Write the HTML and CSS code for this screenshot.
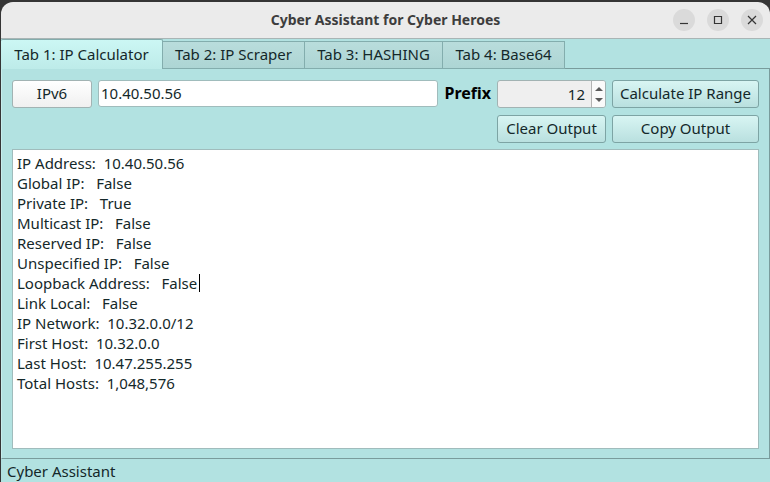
FILE: index.html
```html
<!DOCTYPE html>
<html lang="en">
<head>
<meta charset="utf-8">
<title>Cyber Assistant for Cyber Heroes</title>
<link rel="stylesheet" href="styles.css">
</head>
<body>
<div class="window">
  <header class="titlebar">
    <h1 class="title">Cyber Assistant for Cyber Heroes</h1>
    <div class="window-controls">
      <button class="window-button" type="button" aria-label="Minimize"><svg viewBox="0 0 22 22"><path d="M7 14.5h8"/></svg></button>
      <button class="window-button" type="button" aria-label="Maximize"><svg viewBox="0 0 22 22"><path d="M7.5 7.5h7v7h-7z"/></svg></button>
      <button class="window-button" type="button" aria-label="Close"><svg viewBox="0 0 22 22"><path d="M7 7l8 8M15 7l-8 8"/></svg></button>
    </div>
  </header>
  <div class="tabs" role="tablist">
    <button class="tab tab-first selected" type="button" role="tab" aria-selected="true">Tab 1: IP Calculator</button>
    <button class="tab tab-wide" type="button" role="tab" aria-selected="false">Tab 2: IP Scraper</button>
    <button class="tab tab-medium" type="button" role="tab" aria-selected="false">Tab 3: HASHING</button>
    <button class="tab" type="button" role="tab" aria-selected="false">Tab 4: Base64</button>
  </div>
  <main class="pane">
    <div class="controls">
      <button class="button plain" type="button">IPv6</button>
      <input class="field" type="text" value="10.40.50.56" aria-label="IP address">
      <label class="prefix-label" for="prefix">Prefix</label>
      <div class="spinner">
        <input class="spinner-value" id="prefix" type="number" value="12">
        <div class="spinner-steps">
          <button class="step" type="button" aria-label="Increase"><svg viewBox="0 0 8 4"><path d="M0 4l4-4 4 4z"/></svg></button>
          <button class="step" type="button" aria-label="Decrease"><svg viewBox="0 0 8 4"><path d="M0 0l4 4 4-4z"/></svg></button>
        </div>
      </div>
      <button class="button" type="button">Calculate IP Range</button>
      <button class="button clear" type="button">Clear Output</button>
      <button class="button" type="button">Copy Output</button>
    </div>
    <div class="output">
      <textarea class="output-text" aria-label="Output" spellcheck="false">IP Address:  10.40.50.56
Global IP:   False
Private IP:   True
Multicast IP:   False
Reserved IP:   False
Unspecified IP:   False
Loopback Address:   False
Link Local:   False
IP Network:  10.32.0.0/12
First Host:  10.32.0.0
Last Host:  10.47.255.255
Total Hosts:  1,048,576</textarea>
      <span class="caret"></span>
    </div>
  </main>
  <footer class="statusbar">Cyber Assistant</footer>
</div>
</body>
</html>
```
FILE: styles.css
```css
* {
  box-sizing: border-box;
}

body {
  margin: 0;
  background: #353535;
  color: #14282a;
  font: 15px/20px "Noto Sans", sans-serif;
}

button,
input,
textarea {
  margin: 0;
  color: inherit;
  font: inherit;
}

.window {
  display: flex;
  flex-direction: column;
  min-height: 100vh;
  padding: 2px 0 0 1px;
}

.titlebar {
  display: grid;
  grid-template-columns: 1fr auto 1fr;
  align-items: center;
  height: 37px;
  padding: 0 7px;
  border-bottom: 1px solid #a9b5b5;
  border-radius: 12px 12px 0 0;
  background: #ebebeb;
}

.title {
  grid-column: 2;
  margin: 0;
  color: #3d3d3d;
  font-size: 14px;
  font-weight: 700;
}

.window-controls {
  display: flex;
  justify-content: flex-end;
  gap: 12px;
}

.window-button {
  width: 22px;
  height: 22px;
  padding: 0;
  border: 0;
  border-radius: 50%;
  background: #dadada;
}

.window-button svg {
  display: block;
  fill: none;
  stroke: #353535;
  stroke-width: 1.2;
}

.tabs {
  display: flex;
  align-items: flex-end;
  height: 30px;
  background: linear-gradient(#799c9c, #799c9c) bottom / 100% 1px no-repeat #b2e2e1;
}

.tab {
  width: 122px;
  height: 28px;
  padding: 0 0 2px;
  border: 1px solid #83adad;
  border-left: 0;
  background: linear-gradient(#b9dddc, #add5d4);
  white-space: nowrap;
}

.tab-first {
  width: 162px;
}

.tab-wide {
  width: 142px;
}

.tab-medium {
  width: 138px;
}

.tab.selected {
  height: 30px;
  border-bottom: 0;
  border-radius: 2px 2px 0 0;
  background: linear-gradient(#ccf7f4, #bdebe9);
}

.pane {
  display: flex;
  flex: 1;
  flex-direction: column;
  gap: 6px;
  padding: 11px 10px 9px;
  border: 1px solid #799c9c;
  border-width: 0 1px 1px;
  border-left-color: #c7eeed;
  background: #b2e2e1;
}

.controls {
  display: grid;
  grid-template-columns: 80px 1fr auto 109px 147px;
  gap: 7px 6px;
}

.button {
  height: 28px;
  padding: 0 0 2px;
  border: 1px solid #7da4a4;
  border-radius: 3px;
  background: linear-gradient(#d8f5f3, #b9e0df);
  white-space: nowrap;
}

.button.plain {
  border-color: #a2b3b3;
  background: linear-gradient(#ffffff, #f0f0f0);
}

.button.clear {
  grid-column: 4;
}

.field {
  width: 100%;
  min-width: 0;
  height: 27px;
  padding: 0 2px 2px;
  border: 1px solid #a0bcbc;
  border-radius: 3px;
  background: #ffffff;
}

.prefix-label {
  color: #000000;
  font-size: 16px;
  font-weight: 700;
  line-height: 26px;
}

.spinner {
  display: flex;
  height: 28px;
  border: 1px solid #a2b3b3;
  border-radius: 3px;
  background: #efefef;
  overflow: hidden;
}

.spinner-value {
  flex: 1;
  min-width: 0;
  padding: 0 6px;
  border: 0;
  background: none;
  text-align: right;
  appearance: textfield;
}

.spinner-value::-webkit-inner-spin-button {
  display: none;
}

.spinner-steps {
  display: flex;
  flex-direction: column;
  width: 14px;
  padding: 2px 0;
  border-left: 1px solid #b3b3b3;
  background: #fafafa;
}

.step {
  display: flex;
  flex: 1;
  align-items: center;
  justify-content: center;
  padding: 0;
  border: 0;
  background: none;
}

.step svg {
  width: 8px;
  height: 4px;
  fill: #5a5a5a;
}

.output {
  position: relative;
  display: flex;
  flex: 1;
}

.output-text {
  flex: 1;
  padding: 3px 4px;
  border: 1px solid #a0bcbc;
  outline: 0;
  background: #ffffff;
  resize: none;
}

.caret {
  position: absolute;
  top: 125px;
  left: 187px;
  width: 1px;
  height: 18px;
  background: #000000;
}

.statusbar {
  height: 23px;
  padding: 2px 6px 0;
  background: #b2e2e1;
}
```
